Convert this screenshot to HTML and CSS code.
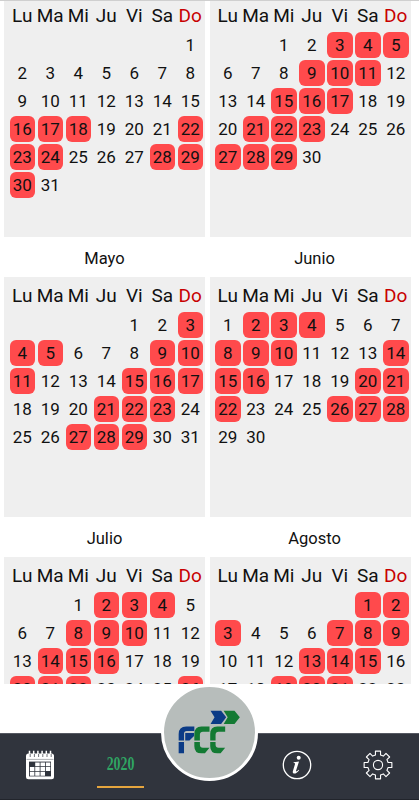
FILE: index.html
```html
<!DOCTYPE html>
<html lang="es">
<head>
<meta charset="UTF-8">
<meta name="viewport" content="width=device-width, initial-scale=1.0">
<title>Calendario 2020</title>
<link rel="stylesheet" href="styles.css">
</head>
<body>

<main class="year" id="year"></main>

<nav class="navbar">
    <a class="nav-item">
        <svg class="nav-icon" viewBox="0 0 30 30">
            <rect x="1" y="3.6" width="28" height="25.600" rx="2.5" fill="#fff"/>
            <path d="M4.5 .8v5M8.700 .8v5M12.900 .8v5M17.100 .8v5M21.300 .8v5M25.500 .8v5" stroke="#fff" stroke-width="1.5"/>
            <path d="M5.2 4v3M9.4 4v3M13.6 4v3M17.8 4v3M22 4v3M26.2 4v3" stroke="#30343d" stroke-width=".7"/>
            <path d="M1.5 9.400h27" stroke="#777b82" stroke-width=".6"/>
            <path d="M4 11.600h22v14.800H4z" fill="#30343d"/>
            <path d="M10.200 12.400h4.500v3.900h-4.500zM15.500 12.400h4.500v3.900h-4.500zM20.800 12.400h4.500v3.900h-4.500zM4.900 17.100h4.500V21H4.900zM10.200 17.100h4.500V21h-4.500zM15.500 17.100h4.500V21h-4.500zM20.800 17.100h4.500V21h-4.500zM4.900 21.800h4.500v3.900H4.900zM10.200 21.800h4.500v3.900h-4.500zM15.500 21.800h4.500v3.900h-4.500z" fill="#fff"/>
        </svg>
    </a>
    <a class="nav-item active"><span class="nav-year">2020</span></a>
    <a class="nav-item nav-center"></a>
    <a class="nav-item">
        <svg class="nav-icon" viewBox="0 0 30 30">
            <circle cx="15" cy="15" r="13.7" fill="none" stroke="#fff" stroke-width="1.3"/>
            <circle cx="16.7" cy="7.8" r="2" fill="#fff"/>
            <path d="M11.7 12.3l5.3-.8-2.9 9.1c-.3 1.2.5 1.3 2.6-.8l.5.5c-2.2 2.9-4.2 3.6-5.4 3.2-1.2-.4-1.2-1.5-.8-2.8l1.9-6.3c.3-1 .1-1.4-1.3-1.4z" fill="#fff"/>
        </svg>
    </a>
    <a class="nav-item">
        <svg class="nav-icon" viewBox="0 0 30 30" fill="none" stroke="#fff" stroke-width="1.1" stroke-linejoin="round">
            <path id="gear"/>
            <circle cx="15" cy="15" r="4.6"/>
        </svg>
    </a>
    <div class="logo">
        <svg viewBox="0 0 90 90">
            <g fill="#0b3b86">
                <path d="M46 23.500h10.500l5 6.500-5 6.500H46l4-6.500z"/>
                <path d="M30 39v4.500h-7.500q-2.700 0-2.700 2.700v6.800h-5.300v-6.500q0-7.500 7.500-7.500z"/>
                <path d="M21 45.500h8.700v3l-4.500 4.500H21zM14.500 54.500h5.300v11h-5.300z"/>
            </g>
            <g fill="#137a33">
                <path d="M59 23.500h10.700l5.300 6.500-5.300 6.500H59l4-6.500z"/>
                <path d="M45 39v5.200h-6.500q-3 0-3 3v5.800h-5.500v-6.500q0-7.500 7-7.500zM30 54.500h5.500v2.700q0 3 3 3H45l-4.500 5.300H37q-7 0-7-7z"/>
                <path d="M60.500 39v5.200H54q-3 0-3 3v5.800h-5.300v-6.500q0-7.500 7-7.500zM45.700 54.500H51v2.700q0 3 3 3h6.500L56 65.500h-3.300q-7 0-7-7z"/>
            </g>
        </svg>
    </div>
</nav>

<script>
    const weekdays = ['Lu', 'Ma', 'Mi', 'Ju', 'Vi', 'Sa', 'Do'];

    // start: empty cells before day 1, marked: days in red
    const months = [
        { name: 'Marzo', start: 6, days: 31, marked: [16, 17, 18, 22, 23, 24, 28, 29, 30] },
        { name: 'Abril', start: 2, days: 30, marked: [3, 4, 5, 9, 10, 11, 15, 16, 17, 21, 22, 23, 27, 28, 29] },
        { name: 'Mayo', start: 4, days: 31, marked: [3, 4, 5, 9, 10, 11, 15, 16, 17, 21, 22, 23, 27, 28, 29] },
        { name: 'Junio', start: 0, days: 30, marked: [2, 3, 4, 8, 9, 10, 14, 15, 16, 20, 21, 22, 26, 27, 28] },
        { name: 'Julio', start: 2, days: 31, marked: [2, 3, 4, 8, 9, 10, 14, 15, 16, 20, 21, 22, 26, 27, 28] },
        { name: 'Agosto', start: 5, days: 31, marked: [1, 2, 3, 7, 8, 9, 13, 14, 15, 19, 20, 21, 25, 26, 27, 31] }
    ];

    function monthHtml(month) {
        let cells = '';
        weekdays.forEach(day => cells += `<span class="weekday">${day}</span>`);
        for (let i = 0; i < month.start; i++) {
            cells += '<span></span>';
        }
        for (let d = 1; d <= month.days; d++) {
            cells += `<span class="day${month.marked.includes(d) ? ' marked' : ''}">${d}</span>`;
        }
        return `<section class="month"><h2>${month.name}</h2><div class="days">${cells}</div></section>`;
    }

    const year = document.getElementById('year');
    year.innerHTML = months.map(monthHtml).join('');
    // March and April are scrolled almost to the top
    year.scrollTop = 44;

    // eight teeth around the settings wheel
    const points = [];
    for (let i = 0; i < 8; i++) {
        [[-14, 10.4], [-10.5, 14.1], [10.5, 14.1], [14, 10.4]].forEach(([offset, r]) => {
            const a = (i * 45 + offset) * Math.PI / 180;
            points.push((15 + r * Math.sin(a)).toFixed(2) + ' ' + (15 - r * Math.cos(a)).toFixed(2));
        });
    }
    document.getElementById('gear').setAttribute('d', 'M' + points.join('L') + 'z');
</script>

</body>
</html>
```
FILE: styles.css
```css
* {
    box-sizing: border-box;
}

body {
    margin: 0;
    height: 100vh;
    display: flex;
    flex-direction: column;
    overflow: hidden;
    background: #fff;
    color: #111;
    font-family: Roboto, sans-serif;
}

.year {
    height: 684px;
    padding: 0 9px 0 4px;
    display: grid;
    grid-template-columns: 201px 201px;
    grid-auto-rows: 280px;
    column-gap: 4.5px;
    overflow: hidden;
    border-top: 1px solid #cfcfcf;
}

.month h2 {
    height: 40px;
    margin: 0;
    font-size: 16.5px;
    font-weight: normal;
    line-height: 43px;
    text-align: center;
}

.month:nth-child(even) h2 {
    padding-left: 9px;
}

.days {
    height: 240px;
    padding: 3px 1px 0 5.5px;
    display: grid;
    grid-template-columns: repeat(7, 25.5px);
    grid-template-rows: 29.5px;
    grid-auto-rows: 25.5px;
    gap: 2.5px;
    background: #efefef;
}

.weekday {
    display: flex;
    justify-content: center;
    font-size: 19px;
    line-height: 31px;
}

.weekday:nth-child(7) {
    color: #c80000;
}

.day {
    border-radius: 6px;
    font-size: 17px;
    line-height: 27px;
    text-align: center;
}

.marked {
    background: #ff4a4c;
}

.navbar {
    position: relative;
    height: 67px;
    margin-top: 49px;
    padding-bottom: 4px;
    flex-shrink: 0;
    display: grid;
    grid-template-columns: 80px 80px 97px 80px 81px;
    background: #30343d;
    border-top: 1px solid #555861;
    border-bottom: 1px solid #22252c;
}

.nav-item {
    position: relative;
    display: flex;
    align-items: center;
    justify-content: center;
}

.nav-icon {
    width: 30px;
    height: 30px;
}

.nav-year {
    color: #2fa563;
    font-family: "Liberation Serif", serif;
    font-size: 18.5px;
    font-weight: bold;
    transform: scaleX(.75);
}

.active::after {
    content: "";
    position: absolute;
    left: 17px;
    bottom: 7px;
    width: 47px;
    height: 2.5px;
    background: #e5a53e;
}

/* sits over the top edge of the bar */
.logo {
    position: absolute;
    left: 161px;
    top: -50px;
    width: 97px;
    height: 97px;
    border: 3.5px solid #fff;
    border-radius: 50%;
    background: #b7bdbb;
}

.logo svg {
    display: block;
}
```
